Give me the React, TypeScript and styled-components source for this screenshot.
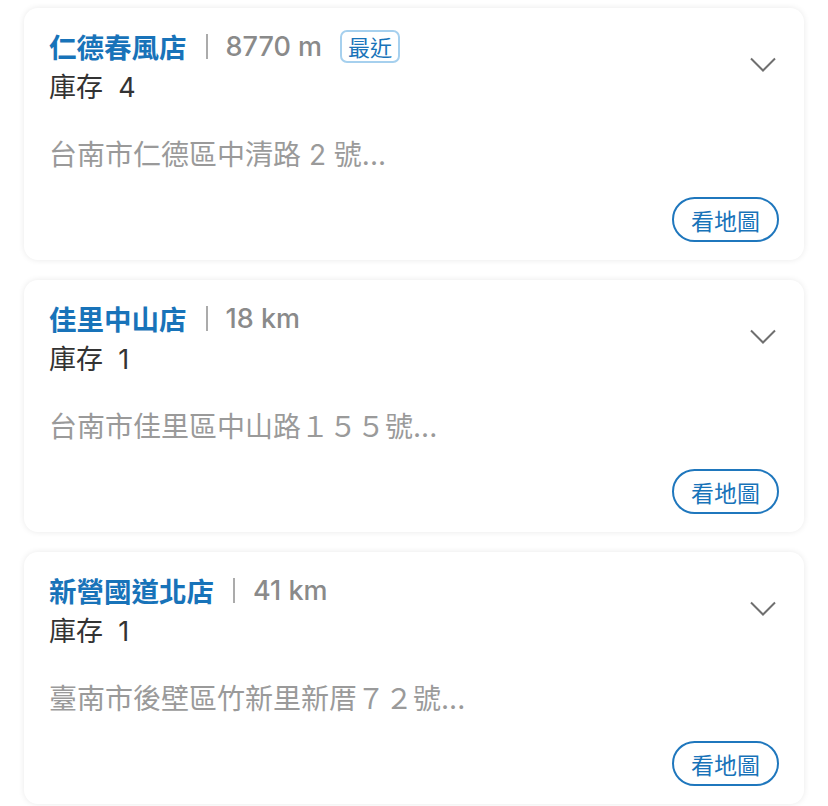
import styled, {createGlobalStyle} from "styled-components";

const GlobalStyle = createGlobalStyle`
    body {
        margin: 0;
        background: #ffffff;
        font-family: Inter, "Noto Sans CJK TC", sans-serif;
    }
`

const stores = [
    {name: "仁德春風店", distance: "8770 m", recent: true, stock: 4, address: "台南市仁德區中清路 2 號..."},
    {name: "佳里中山店", distance: "18 km", recent: false, stock: 1, address: "台南市佳里區中山路１５５號..."},
    {name: "新營國道北店", distance: "41 km", recent: false, stock: 1, address: "臺南市後壁區竹新里新厝７２號..."},
]

const List = styled.div`
    display: flex;
    flex-direction: column;
    gap: 20px;
    padding: 8px 24px 2px 24px;
`

const Card = styled.div`
    display: flex;
    flex-direction: column;
    height: 252px;
    box-sizing: border-box;
    padding: 18px 25px 18px 25px;
    background: #fff;
    border-radius: 14px;
    box-shadow: 0 0 6px rgba(0, 0, 0, 0.09);
`

const Header = styled.div`
    display: flex;
    justify-content: space-between;
    align-items: flex-start;
`

const TitleLine = styled.div`
    display: flex;
    align-items: center;
    height: 40px;
`

const Name = styled.span`
    font-size: 27.5px;
    font-weight: 700;
    color: #1873b9;
`

const Separator = styled.span`
    width: 2px;
    height: 25px;
    background: #ababab;
    margin: 0 18px 0 19px;
`

const Distance = styled.span`
    font-size: 27px;
    font-weight: 500;
    color: #8a8a8a;
`

const Badge = styled.span`
    margin-left: 18px;
    height: 33px;
    box-sizing: border-box;
    padding: 0 6px;
    display: flex;
    align-items: center;
    border: 2px solid #a6d0ee;
    border-radius: 7px;
    font-size: 22px;
    color: #1873b9;
`

const Chevron = styled.svg`
    margin-top: 31px;
    margin-right: 3px;
    width: 26px;
    height: 16px;
`

const Stock = styled.div`
    margin-top: 2px;
    font-size: 27px;
    line-height: 40px;
    color: #333;
`

const Address = styled.div`
    margin-top: 27px;
    font-size: 28px;
    line-height: 40px;
    color: #9a9a9a;
`

const Footer = styled.div`
    margin-top: auto;
    display: flex;
    justify-content: flex-end;
`

const MapButton = styled.button`
    height: 45px;
    width: 107px;
    box-sizing: border-box;
    border: 2px solid #1f77bd;
    border-radius: 23px;
    background: #fff;
    color: #1873b9;
    font-family: Inter, "Noto Sans CJK TC", sans-serif;
    font-size: 23px;
    padding: 0;
    cursor: pointer;
`

const StoreCard = ({store}: { store: typeof stores[number] }) => {
    return (
        <Card>
            <Header>
                <div>
                    <TitleLine>
                        <Name>{store.name}</Name>
                        <Separator/>
                        <Distance>{store.distance}</Distance>
                        {store.recent && <Badge>最近</Badge>}
                    </TitleLine>
                    <Stock>庫存&nbsp;&nbsp;{store.stock}</Stock>
                </div>
                <Chevron viewBox="0 0 26 16">
                    <path d="M1 1.5 L13 13.5 L25 1.5" fill="none" stroke="#6f6f6f" strokeWidth="2"/>
                </Chevron>
            </Header>
            <Address>{store.address}</Address>
            <Footer>
                <MapButton>看地圖</MapButton>
            </Footer>
        </Card>
    )
}

export default function App() {
    return (
        <>
            <GlobalStyle/>
            <List>
                {stores.map(s => <StoreCard key={s.name} store={s}/>)}
            </List>
        </>
    )
}
